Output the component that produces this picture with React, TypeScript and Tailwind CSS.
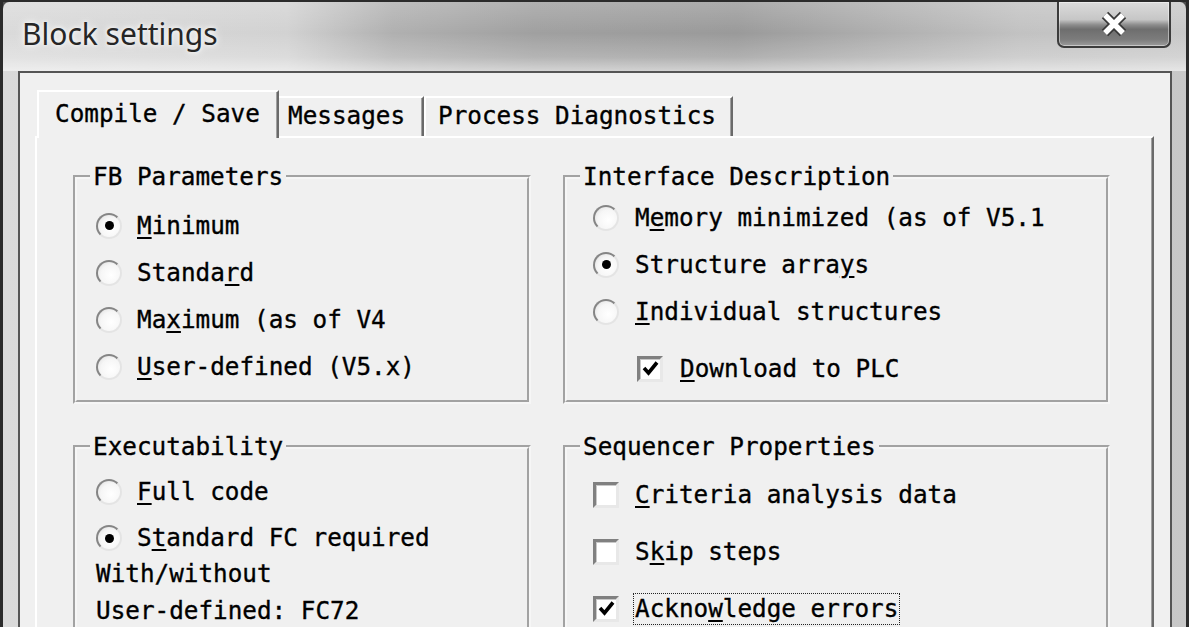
import type { ReactNode } from 'react';

function U({ children }: { children: ReactNode }) {
  return <span className="underline decoration-2 underline-offset-[3px]">{children}</span>;
}

function Radio({ checked }: { checked?: boolean }) {
  return (
    <span className="w-[26px] h-[26px] shrink-0 rounded-full flex items-center justify-center border-2 border-t-[#858585] border-l-[#858585] border-r-[#e4e4e4] border-b-[#e4e4e4] bg-[radial-gradient(circle_at_60%_60%,#ffffff_0%,#f6f6f6_55%,#dadada_100%)]">
      {checked && <span className="w-[9px] h-[9px] rounded-full bg-black" />}
    </span>
  );
}

function Check({ checked }: { checked?: boolean }) {
  return (
    <span className="w-[26px] h-[26px] shrink-0 flex items-center justify-center border-[3px] border-t-[#808080] border-l-[#808080] border-r-[#e8e8e8] border-b-[#e8e8e8] bg-white shadow-[inset_1px_1px_0_#c8c8c8]">
      {checked && (
        <svg width="19" height="19" viewBox="0 0 19 19">
          <polyline points="3,9 7.5,14 16,3.5" fill="none" stroke="#000" strokeWidth="3.6" />
        </svg>
      )}
    </span>
  );
}

function Row({ kind, checked, gap, className, children }: { kind: 'radio' | 'check'; checked?: boolean; gap: string; className: string; children: ReactNode }) {
  return (
    <div className={`flex items-center ${gap} ${className}`}>
      {kind === 'radio' ? <Radio checked={checked} /> : <Check checked={checked} />}
      <span className="whitespace-nowrap leading-[30px]">{children}</span>
    </div>
  );
}

function Group({ title, className, children }: { title: string; className: string; children: ReactNode }) {
  return (
    <fieldset className={`border-4 border-[#f6f6f6] [border-style:groove] px-0 min-w-0 ${className}`}>
      <legend className="ml-[13px] px-[3px] leading-[30px] whitespace-nowrap">{title}</legend>
      {children}
    </fieldset>
  );
}

function CloseButton() {
  return (
    <div className="w-[114px] h-[46px] rounded-b-[7px] border-2 border-t-0 border-[#3c3c3c] bg-[linear-gradient(to_bottom,#dcdcdc_0%,#c6c6c6_40%,#8c8c8c_52%,#6e6e6e_62%,#7c7c7c_85%,#9c9c9c_100%)] shadow-[inset_0_0_0_1px_rgba(255,255,255,0.45)] flex items-center justify-center">
      <svg width="28" height="26" viewBox="0 0 28 26">
        <path d="M5 4 L23 22 M23 4 L5 22" stroke="#3a3a3a" strokeWidth="9" />
        <path d="M5 4 L23 22 M23 4 L5 22" stroke="#ffffff" strokeWidth="5.5" />
      </svg>
    </div>
  );
}

export default function App() {
  return (
    <div className="w-[1189px] h-[627px] overflow-hidden bg-[#2b2b2b]">
      <div className="h-full flex flex-col border-l-[3px] border-r-[3px] border-t-2 border-[#2b2b2b] rounded-t-[9px] bg-[linear-gradient(to_right,#dadada_0%,#d2d2d2_24%,#b0b0b0_33%,#a0a0a0_45%,#9a9a9a_62%,#aeaeae_74%,#c2c2c2_86%,#c8c8c8_100%)]">
        {/* title bar */}
        <div className="h-[69px] shrink-0 flex items-start justify-between pl-[19px] pr-[15px] bg-[linear-gradient(to_bottom,rgba(255,255,255,0.18)_0%,rgba(255,255,255,0)_45%,rgba(255,255,255,0.22)_80%,rgba(255,255,255,0.55)_100%)]">
          <div className="pt-[17px] leading-none font-['Noto_Sans',sans-serif] text-[30px] text-[#262626] [text-shadow:0_0_10px_#ffffff,0_0_4px_#ffffff]">
            Block settings
          </div>
          <CloseButton />
        </div>

        {/* client area */}
        <div className="flex-1 ml-[15px] mr-[14px] border-2 border-b-0 border-[#555555] bg-[#f0f0f0] overflow-hidden font-['DejaVu_Sans_Mono',monospace] text-[24.3px] text-black [-webkit-text-stroke:0.35px_#000]">
          <div className="pt-[17px] pl-[15px] pr-[16px]">
            {/* tabs */}
            <div className="flex items-end h-[46px] pl-[2px]">
              <div className="relative z-10 h-[48px] -mb-[2px] w-[242px] bg-[#f0f0f0] border-l-2 border-t-2 border-white border-r-2 border-r-[#6a6a6a] shadow-[inset_-1px_0_0_#a0a0a0] pl-[16px] pt-[7px] leading-[30px] whitespace-nowrap">
                Compile / Save
              </div>
              <div className="h-[40px] w-[145px] border-t-2 border-white border-r-2 border-r-[#6a6a6a] shadow-[inset_-1px_0_0_#a0a0a0] pl-[9px] pt-[3px] leading-[30px] whitespace-nowrap">
                Messages
              </div>
              <div className="h-[40px] w-[309px] border-t-2 border-l-2 border-white border-r-2 border-r-[#6a6a6a] shadow-[inset_-1px_0_0_#a0a0a0] pl-[12px] pt-[3px] leading-[30px] whitespace-nowrap">
                Process Diagnostics
              </div>
            </div>

            {/* panel */}
            <div className="h-[520px] border-l-2 border-t-2 border-white border-r-2 border-r-[#6a6a6a] shadow-[inset_-1px_0_0_#a0a0a0] pl-[36px] pt-[24px]">
              <div className="flex gap-[32px]">
                <Group title="FB Parameters" className="w-[458px] h-[242px] pt-[10px]">
                  <Row kind="radio" checked gap="gap-[15px]" className="h-[47px] pl-[19px]"><U>M</U>inimum</Row>
                  <Row kind="radio" gap="gap-[15px]" className="h-[47px] pl-[19px]">Standa<U>r</U>d</Row>
                  <Row kind="radio" gap="gap-[15px]" className="h-[47px] pl-[19px]">Ma<U>x</U>imum (as of V4</Row>
                  <Row kind="radio" gap="gap-[15px]" className="h-[47px] pl-[19px]"><U>U</U>ser-defined (V5.x)</Row>
                </Group>
                <Group title="Interface Description" className="w-[547px] h-[242px] pt-[2px]">
                  <Row kind="radio" gap="gap-[16px]" className="h-[47px] pl-[26px]">M<U>e</U>mory minimized (as of V5.1</Row>
                  <Row kind="radio" checked gap="gap-[16px]" className="h-[47px] pl-[26px]">Structure arra<U>y</U>s</Row>
                  <Row kind="radio" gap="gap-[16px]" className="h-[47px] pl-[26px]"><U>I</U>ndividual structures</Row>
                  <Row kind="check" checked gap="gap-[17px]" className="h-[47px] pl-[70px] mt-[10px]"><U>D</U>ownload to PLC</Row>
                </Group>
              </div>

              <div className="flex gap-[32px] mt-[28px]">
                <Group title="Executability" className="w-[458px] h-[260px] pt-[7px]">
                  <Row kind="radio" gap="gap-[15px]" className="h-[46px] pl-[19px]"><U>F</U>ull code</Row>
                  <Row kind="radio" checked gap="gap-[15px]" className="h-[46px] pl-[19px]">S<U>t</U>andard FC required</Row>
                  <div className="pl-[19px] -mt-[6px] leading-[37px] whitespace-nowrap">
                    <div>With/without</div>
                    <div>User-defined: FC72</div>
                  </div>
                </Group>
                <Group title="Sequencer Properties" className="w-[547px] h-[260px] pt-[4px]">
                  <Row kind="check" gap="gap-[16px]" className="h-[57px] pl-[26px]"><U>C</U>riteria analysis data</Row>
                  <Row kind="check" gap="gap-[16px]" className="h-[57px] pl-[26px]">S<U>k</U>ip steps</Row>
                  <div className="h-[57px] pl-[26px] flex items-center gap-[14px]">
                    <Check checked />
                    <span className="whitespace-nowrap leading-[30px] border border-dotted border-[#222] px-[1px]">
                      Ackno<U>w</U>ledge errors
                    </span>
                  </div>
                </Group>
              </div>
            </div>
          </div>
        </div>
      </div>
    </div>
  );
}
